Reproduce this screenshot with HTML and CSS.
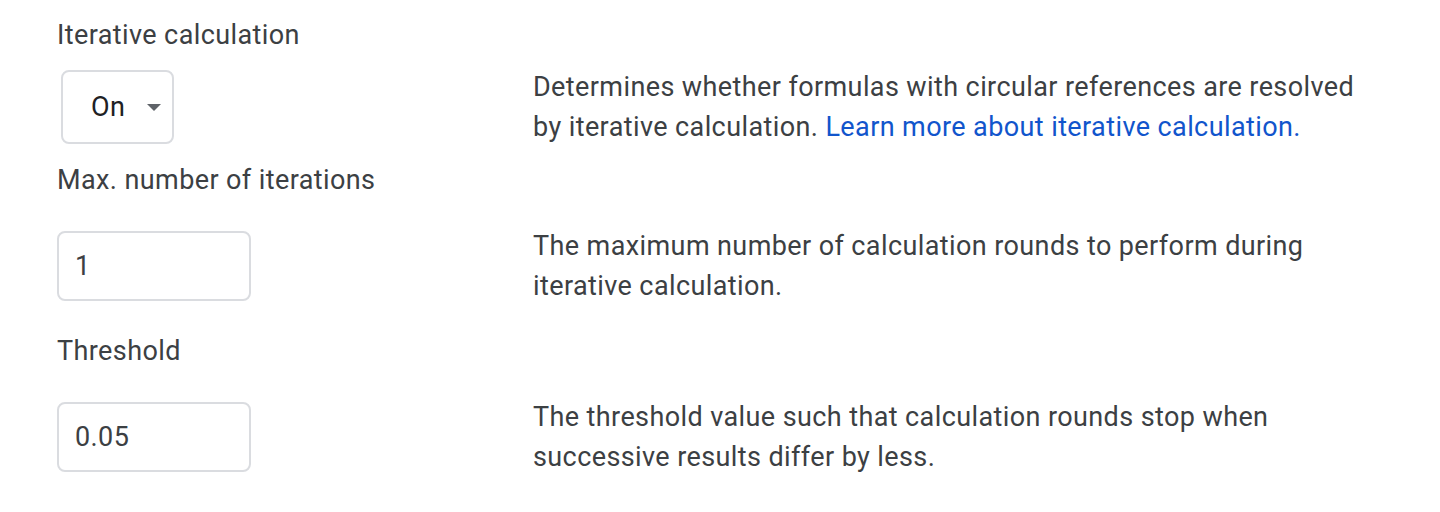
FILE: index.html
```html
<!DOCTYPE html>
<html lang="en">
<head>
<meta charset="utf-8">
<title>Iterative calculation</title>
<link rel="stylesheet" href="styles.css">
</head>
<body>
<div class="settings">
  <div class="field-label first">Iterative calculation</div>
  <div class="field-row row-select">
    <div class="control">
      <div class="select">
        <span class="select-value">On</span>
        <span class="select-arrow"></span>
      </div>
    </div>
    <div class="desc">Determines whether formulas with circular references are resolved by iterative calculation. <a class="link" href="#">Learn more about iterative calculation.</a></div>
  </div>

  <div class="field-label after-select">Max. number of iterations</div>
  <div class="field-row">
    <div class="control">
      <div class="input">1</div>
    </div>
    <div class="desc">The maximum number of calculation rounds to perform during iterative calculation.</div>
  </div>

  <div class="field-label">Threshold</div>
  <div class="field-row">
    <div class="control">
      <div class="input">0.05</div>
    </div>
    <div class="desc">The threshold value such that calculation rounds stop when successive results differ by less.</div>
  </div>
</div>
</body>
</html>
```

FILE: styles.css
```css
html, body {
  margin: 0;
  padding: 0;
  background: #ffffff;
}

body {
  font-family: Roboto, "Liberation Sans", Arial, sans-serif;
  font-size: 27px;
  letter-spacing: 0.4px;
  color: #3c4043;
}

.settings {
  padding: 15px 0 0 57px;
}

.field-label {
  line-height: 40px;
  height: 40px;
  margin-top: 25px;
}

.field-label.first {
  margin-top: 0;
}

.field-label.after-select {
  margin-top: 13px;
}

.field-row {
  display: flex;
  align-items: center;
  margin-top: 26px;
}

.field-row.row-select {
  margin-top: 12px;
}

.control {
  width: 476px;
  flex: none;
}

.select {
  margin-left: 4px;
  width: 113px;
  height: 74px;
  box-sizing: border-box;
  border: 2px solid #dadce0;
  border-radius: 8px;
  display: flex;
  align-items: center;
  padding-left: 28px;
  color: #202124;
}

.select-value {
  line-height: 1;
}

.select-arrow {
  width: 0;
  height: 0;
  border-left: 7px solid transparent;
  border-right: 7px solid transparent;
  border-top: 7px solid #5f6368;
  margin-left: 22px;
}

.input {
  width: 194px;
  height: 70px;
  box-sizing: border-box;
  border: 2px solid #dadce0;
  border-radius: 8px;
  display: flex;
  align-items: center;
  padding-left: 16px;
}

.desc {
  width: 830px;
  line-height: 40px;
}

.link {
  color: #1155cc;
  text-decoration: none;
}
```
